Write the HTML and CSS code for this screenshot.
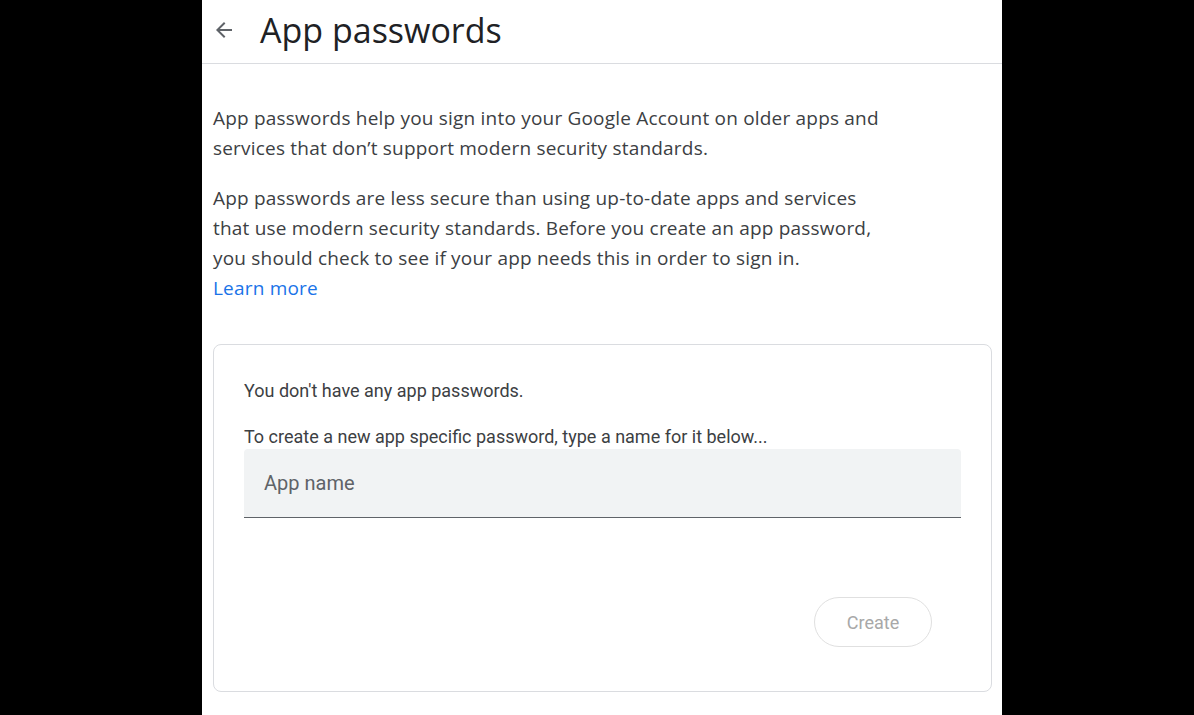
FILE: index.html
```html
<!DOCTYPE html>
<html>
<head>
<meta charset="utf-8">
<link rel="stylesheet" href="styles.css">
</head>
<body>
<div class="panel">
  <header class="header">
    <button class="back" aria-label="Back">
      <svg width="24" height="24" viewBox="0 0 24 24"><path d="M20 11H7.83l5.59-5.59L12 4l-8 8 8 8 1.41-1.41L7.83 13H20v-2z" fill="#5f6368"/></svg>
    </button>
    <h1 class="title">App passwords</h1>
  </header>
  <main class="content">
    <p class="para">App passwords help you sign into your Google Account on older apps and services that don’t support modern security standards.</p>
    <p class="para">App passwords are less secure than using up-to-date apps and services that use modern security standards. Before you create an app password, you should check to see if your app needs this in order to sign in.<br><a class="link" href="#">Learn more</a></p>
    <section class="card">
      <p class="card-text">You don't have any app passwords.</p>
      <p class="card-text second">To create a new app specific password, type a name for it below...</p>
      <div class="input"><span class="placeholder">App name</span></div>
      <div class="actions">
        <button class="create" disabled>Create</button>
      </div>
    </section>
  </main>
</div>
</body>
</html>
```
FILE: styles.css
```css
html, body {
  margin: 0;
  padding: 0;
  background: #000;
  height: 100%;
  overflow: hidden;
}
.panel {
  width: 800px;
  margin-left: 202px;
  background: #fff;
  min-height: 100%;
}
.header {
  height: 59px;
  padding-bottom: 4px;
  border-bottom: 1px solid #dadce0;
  display: flex;
  align-items: center;
}
.back {
  border: 0;
  background: none;
  padding: 0;
  margin-left: 10px;
  width: 24px;
  height: 24px;
  display: flex;
}
.title {
  margin: 0 0 0 24px;
  font-family: "Open Sans", sans-serif;
  font-weight: 400;
  font-size: 34px;
  color: #202124;
}
.content {
  padding: 39px 10px 0 11px;
}
.para {
  margin: 0 0 20px;
  font-family: "Open Sans", sans-serif;
  font-size: 19px;
  line-height: 30px;
  letter-spacing: 0.2px;
  color: #3c4043;
  width: 676px;
}
.link {
  color: #1a73e8;
  text-decoration: none;
}
.card {
  margin-top: 41px;
  border: 1px solid #dadce0;
  border-radius: 8px;
  padding: 34px 30px 44px 30px;
}
.card-text {
  margin: 0;
  font-family: Roboto, sans-serif;
  font-size: 18px;
  line-height: 24px;
  color: #3c4043;
}
.card-text.second {
  margin-top: 22px;
}
.input {
  margin-top: 0;
  height: 68px;
  background: #f1f3f4;
  border-bottom: 1px solid #5f6368;
  border-radius: 4px 4px 0 0;
  display: flex;
  align-items: center;
  padding-left: 20px;
}
.placeholder {
  font-family: Roboto, sans-serif;
  font-size: 20px;
  color: #5f6368;
}
.actions {
  display: flex;
  justify-content: flex-end;
  margin-top: 79px;
  padding-right: 29px;
}
.create {
  width: 118px;
  height: 50px;
  border: 1px solid #e0e0e0;
  border-radius: 25px;
  background: #fff;
  font-family: Roboto, sans-serif;
  font-size: 18px;
  color: #a8a8a8;
}
```
